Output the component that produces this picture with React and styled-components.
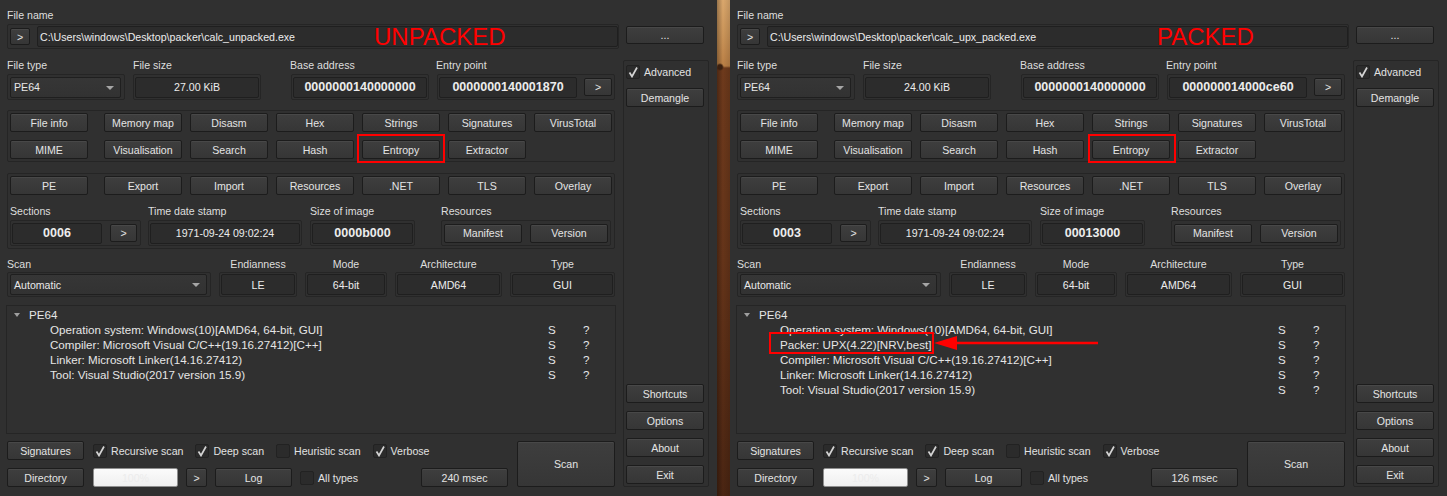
import React from 'react';
import styled, { createGlobalStyle } from 'styled-components';

const GlobalStyle = createGlobalStyle`
  html, body { margin: 0; padding: 0; background: #303030; }
  body { width: 1447px; height: 496px; overflow: hidden; font-family: "Liberation Sans", Arial, sans-serif; }
  * { box-sizing: border-box; }
`;

const Screen = styled.div`
  display: flex;
  width: 1447px;
  height: 496px;
`;

const Wood = styled.div`
  width: 13px;
  height: 496px;
  flex: none;
  background:
    radial-gradient(ellipse 4px 4px at 3px 67px, #3a2010 0, #3a2010 55%, transparent 100%),
    linear-gradient(to right, rgba(0,0,0,0.3), rgba(0,0,0,0) 45%, rgba(0,0,0,0.12)),
    linear-gradient(to bottom, #dba86d 0, #c99256 40px, #bb8046 66px, #6e3a1c 68px, #653419 260px, #4a2512 496px);
`;

const Window = styled.div`
  position: relative;
  width: 717px;
  height: 496px;
  flex: none;
  background: #303030;
  color: #dedede;
  font-size: 10.6px;
  padding: 8px 0 0 7px;
  display: flex;
  flex-direction: column;
`;

const Label = styled.div`
  height: 14px;
  line-height: 14px;
  white-space: nowrap;
  color: #dedede;
  margin-left: ${p => p.$ml || 0}px;
`;

const Frame = styled.div`
  flex: none;
  width: ${p => (p.$w ? `${p.$w}px` : 'auto')};
  height: ${p => p.$h || 26}px;
  border: 1px solid #252525;
  border-radius: 2px;
  padding: ${p => p.$pad || '0 1px'};
  display: flex;
  align-items: center;
  gap: ${p => (p.$gap === undefined ? 8 : p.$gap)}px;
`;

const Btn = styled.div`
  flex: none;
  width: ${p => p.$w || 78}px;
  height: ${p => p.$h || 19}px;
  margin-top: ${p => p.$mt || 0}px;
  margin-left: ${p => p.$ml || 0};
  font-size: 10.6px;
  color: #e4e4e4;
  background: linear-gradient(#3e3e3e, #363636);
  border: 1px solid #1c1c1c;
  border-radius: 2px;
  box-shadow: inset 0 1px 0 #484848;
  display: flex;
  align-items: center;
  justify-content: center;
  white-space: nowrap;
`;

const Field = styled.div`
  flex: ${p => (p.$w ? 'none' : 1)};
  width: ${p => (p.$w ? `${p.$w}px` : 'auto')};
  height: 21px;
  background: #2c2c2c;
  border: 1px solid #1f1f1f;
  border-radius: 2px;
  display: flex;
  align-items: center;
  justify-content: ${p => (p.$left ? 'flex-start' : 'center')};
  padding: 0 2px;
  font-size: ${p => (p.$bold ? '12.5px' : '10.6px')};
  font-weight: ${p => (p.$bold ? 700 : 400)};
  color: #ececec;
  white-space: nowrap;
  overflow: hidden;
`;

const Combo = styled.div`
  position: relative;
  flex: none;
  width: ${p => p.$w}px;
  height: 21px;
  background: linear-gradient(#363636, #323232);
  border: 1px solid #1f1f1f;
  border-radius: 2px;
  display: flex;
  align-items: center;
  padding-left: 3px;
  color: #e8e8e8;
  &::after {
    content: '';
    position: absolute;
    right: 6px;
    top: 8px;
    border-left: 4px solid transparent;
    border-right: 4px solid transparent;
    border-top: 4px solid #a6a6a6;
  }
`;

const FileRow = styled.div`
  display: flex;
  align-items: flex-start;
  gap: 7px;
  margin-top: 2px;
`;

const Body = styled.div`
  display: flex;
  gap: 8px;
  margin-top: 9px;
`;

const Main = styled.div`
  width: 608px;
  flex: none;
  display: flex;
  flex-direction: column;
`;

const Cell = styled.div`
  display: flex;
  flex-direction: column;
  gap: ${p => (p.$gap === undefined ? 2 : p.$gap)}px;
  align-items: ${p => (p.$center ? 'center' : 'flex-start')};
`;

const InfoGrid = styled.div`
  display: grid;
  grid-template-columns: 126px 158px 146px 178px;
`;

const Group = styled.div`
  margin-top: ${p => p.$mt}px;
  height: ${p => p.$h}px;
  border: 1px solid #252525;
  border-radius: 2px;
  padding: 2px;
  display: flex;
  flex-direction: column;
`;

const ButtonGrid = styled.div`
  display: grid;
  grid-template-columns: 86px repeat(6, 78px);
  column-gap: 8px;
  row-gap: 8px;
`;

const HeaderGrid = styled.div`
  display: grid;
  grid-template-columns: 138px 162px 131px 171px;
  margin-top: 9px;
`;

const ScanGrid = styled.div`
  display: grid;
  grid-template-columns: 204px 78px 82px 107px 105px;
  column-gap: 8px;
  margin-top: 8px;
`;

const Tree = styled.div`
  margin: 8px -1px 0;
  height: 129px;
  border: 1px solid #252525;
  padding-top: 1px;
  font-size: 11.6px;
  color: #e6e6e6;
`;

const TreeRow = styled.div`
  display: grid;
  grid-template-columns: 541px 35px auto;
  height: 15px;
  line-height: 15px;
  white-space: nowrap;
`;

const TreeName = styled.div`
  display: flex;
  align-items: center;
  padding-left: ${p => (p.$depth ? 43 : 7)}px;
`;

const Expander = styled.span`
  width: 0;
  height: 0;
  border-left: 3.5px solid transparent;
  border-right: 3.5px solid transparent;
  border-top: 4px solid #a0a0a0;
  margin-right: 9px;
`;

const Bottom = styled.div`
  display: flex;
  gap: 9px;
  margin-top: 7px;
`;

const BottomRows = styled.div`
  width: 501px;
  display: flex;
  flex-direction: column;
  gap: 8px;
`;

const BottomRow = styled.div`
  display: flex;
  align-items: center;
  height: 19px;
  gap: ${p => p.$gap || 8}px;
`;

const CheckList = styled.div`
  display: flex;
  align-items: center;
  gap: 12px;
`;

const CheckItem = styled.div`
  display: flex;
  align-items: center;
  gap: 4px;
  height: 17px;
  white-space: nowrap;
  color: #e2e2e2;
`;

const CheckBox = styled.span`
  width: 14px;
  height: 14px;
  flex: none;
  background: #2b2b2b;
  border: 1px solid #222;
  border-radius: 2px;
  display: flex;
  align-items: center;
  justify-content: center;
`;

const Progress = styled.div`
  width: 85px;
  height: 19px;
  margin-left: 1px;
  flex: none;
  background: linear-gradient(#fbfbfb, #efefef);
  border: 1px solid #8e8e8e;
  border-radius: 2px;
  color: #ececec;
  display: flex;
  align-items: center;
  justify-content: center;
`;

const Sidebar = styled.div`
  width: 86px;
  height: 427px;
  margin-top: 2px;
  flex: none;
  border: 1px solid #252525;
  border-radius: 2px;
  padding: 2px;
  display: flex;
  flex-direction: column;
  align-items: flex-start;
`;

const SideBottom = styled.div`
  margin-top: auto;
  display: flex;
  flex-direction: column;
  gap: 8px;
`;

const RedText = styled.div`
  position: absolute;
  left: ${p => p.$x}px;
  top: 25px;
  font-size: 24px;
  line-height: 1;
  color: #ff0000;
  white-space: nowrap;
`;

const RedBox = styled.div`
  position: absolute;
  left: ${p => p.$x}px;
  top: ${p => p.$y}px;
  width: ${p => p.$w}px;
  height: ${p => p.$h}px;
  border: 2px solid #ff0000;
`;

const ArrowSvg = styled.svg`
  position: absolute;
  left: 200px;
  top: 333px;
`;

function Check({ checked, children }) {
  return (
    <CheckItem>
      <CheckBox>
        {checked && (
          <svg width="12" height="12" viewBox="0 0 12 12">
            <polyline points="2.5,6.5 5,10.5 10,1.5" fill="none" stroke="#d4d4d4" strokeWidth="1.7" />
          </svg>
        )}
      </CheckBox>
      {children}
    </CheckItem>
  );
}

const tools1 = ['File info', 'Memory map', 'Disasm', 'Hex', 'Strings', 'Signatures', 'VirusTotal', 'MIME', 'Visualisation', 'Search', 'Hash', 'Entropy', 'Extractor'];
const tools2 = ['PE', 'Export', 'Import', 'Resources', '.NET', 'TLS', 'Overlay'];

function DieWindow({ d }) {
  return (
    <Window>
      <Label>File name</Label>
      <FileRow>
        <Frame $w={612} $h={25} $gap={7} $pad="0 0 0 2px">
          <Btn $w={20} $h={17}>&gt;</Btn>
          <Field $left>{d.path}</Field>
        </Frame>
        <Btn $mt={2} $h={18}>...</Btn>
      </FileRow>
      <Body>
        <Main>
          <InfoGrid>
            <Cell>
              <Label>File type</Label>
              <Frame $w={118} $pad="0 0 0 2px">
                <Combo $w={111}>PE64</Combo>
              </Frame>
            </Cell>
            <Cell>
              <Label>File size</Label>
              <Frame $w={128}>
                <Field $w={124}>{d.size}</Field>
              </Frame>
            </Cell>
            <Cell>
              <Label $ml={-1}>Base address</Label>
              <Frame $w={138}>
                <Field $w={134} $bold>0000000140000000</Field>
              </Frame>
            </Cell>
            <Cell>
              <Label $ml={-1}>Entry point</Label>
              <Frame $w={178} $gap={7}>
                <Field $w={138} $bold>{d.entry}</Field>
                <Btn $w={28} $h={18}>&gt;</Btn>
              </Frame>
            </Cell>
          </InfoGrid>

          <Group $mt={10} $h={52}>
            <ButtonGrid>
              {tools1.map(t => (
                <Btn key={t}>{t}</Btn>
              ))}
            </ButtonGrid>
          </Group>

          <Group $mt={11} $h={76}>
            <ButtonGrid>
              {tools2.map(t => (
                <Btn key={t}>{t}</Btn>
              ))}
            </ButtonGrid>
            <HeaderGrid>
              <Cell>
                <Label>Sections</Label>
                <Frame $w={131}>
                  <Field $w={90} $bold>{d.sections}</Field>
                  <Btn $w={27} $h={18}>&gt;</Btn>
                </Frame>
              </Cell>
              <Cell>
                <Label>Time date stamp</Label>
                <Frame $w={154}>
                  <Field $w={150}>1971-09-24 09:02:24</Field>
                </Frame>
              </Cell>
              <Cell>
                <Label>Size of image</Label>
                <Frame $w={105}>
                  <Field $w={101} $bold>{d.image}</Field>
                </Frame>
              </Cell>
              <Cell>
                <Label>Resources</Label>
                <Frame $w={170} $pad="0 2px">
                  <Btn>Manifest</Btn>
                  <Btn>Version</Btn>
                </Frame>
              </Cell>
            </HeaderGrid>
          </Group>

          <ScanGrid>
            <Cell $gap={1}>
              <Label>Scan</Label>
              <Frame $w={204} $h={25} $pad="0 0 0 2px">
                <Combo $w={197}>Automatic</Combo>
              </Frame>
            </Cell>
            <Cell $gap={1} $center>
              <Label>Endianness</Label>
              <Frame $w={78} $h={25}>
                <Field $w={74}>LE</Field>
              </Frame>
            </Cell>
            <Cell $gap={1} $center>
              <Label>Mode</Label>
              <Frame $w={82} $h={25}>
                <Field $w={78}>64-bit</Field>
              </Frame>
            </Cell>
            <Cell $gap={1} $center>
              <Label>Architecture</Label>
              <Frame $w={107} $h={25}>
                <Field $w={103}>AMD64</Field>
              </Frame>
            </Cell>
            <Cell $gap={1} $center>
              <Label>Type</Label>
              <Frame $w={105} $h={25}>
                <Field $w={101}>GUI</Field>
              </Frame>
            </Cell>
          </ScanGrid>

          <Tree>
            <TreeRow>
              <TreeName>
                <Expander />
                PE64
              </TreeName>
            </TreeRow>
            {d.results.map(r => (
              <TreeRow key={r}>
                <TreeName $depth={1}>{r}</TreeName>
                <span>S</span>
                <span>?</span>
              </TreeRow>
            ))}
          </Tree>

          <Bottom>
            <BottomRows>
              <BottomRow $gap={9}>
                <Btn $w={77}>Signatures</Btn>
                <CheckList>
                  <Check checked>Recursive scan</Check>
                  <Check checked>Deep scan</Check>
                  <Check>Heuristic scan</Check>
                  <Check checked>Verbose</Check>
                </CheckList>
              </BottomRow>
              <BottomRow>
                <Btn $w={77}>Directory</Btn>
                <Progress>100%</Progress>
                <Btn $w={21}>&gt;</Btn>
                <Btn $w={77}>Log</Btn>
                <Check>All types</Check>
                <Btn $w={87} $ml="auto">{d.time}</Btn>
              </BottomRow>
            </BottomRows>
            <Btn $w={98} $h={46}>Scan</Btn>
          </Bottom>
        </Main>

        <Sidebar>
          <Check checked>Advanced</Check>
          <Btn $mt={8}>Demangle</Btn>
          <SideBottom>
            <Btn>Shortcuts</Btn>
            <Btn>Options</Btn>
            <Btn>About</Btn>
            <Btn>Exit</Btn>
          </SideBottom>
        </Sidebar>
      </Body>

      <RedText $x={d.markX}>{d.mark}</RedText>
      <RedBox $x={d.entropyX} $y={134} $w={88} $h={29} />
      {d.packer && (
        <>
          <RedBox $x={39} $y={332} $w={165} $h={22} />
          <ArrowSvg width="170" height="20" viewBox="0 0 170 20">
            <line x1="22" y1="10" x2="168" y2="10" stroke="#ff0000" strokeWidth="2.5" />
            <polygon points="4,10 27,3 27,17" fill="#ff0000" />
          </ArrowSvg>
        </>
      )}
    </Window>
  );
}

const baseResults = [
  'Operation system: Windows(10)[AMD64, 64-bit, GUI]',
  'Compiler: Microsoft Visual C/C++(19.16.27412)[C++]',
  'Linker: Microsoft Linker(14.16.27412)',
  'Tool: Visual Studio(2017 version 15.9)',
];

const left = {
  path: 'C:\\Users\\windows\\Desktop\\packer\\calc_unpacked.exe',
  size: '27.00 KiB',
  entry: '0000000140001870',
  sections: '0006',
  image: '0000b000',
  time: '240 msec',
  results: baseResults,
  mark: 'UNPACKED',
  markX: 374,
  entropyX: 357,
  packer: false,
};

const right = {
  path: 'C:\\Users\\windows\\Desktop\\packer\\calc_upx_packed.exe',
  size: '24.00 KiB',
  entry: '000000014000ce60',
  sections: '0003',
  image: '00013000',
  time: '126 msec',
  results: [baseResults[0], 'Packer: UPX(4.22)[NRV,best]', ...baseResults.slice(1)],
  mark: 'PACKED',
  markX: 427,
  entropyX: 358,
  packer: true,
};

export default function App() {
  return (
    <>
      <GlobalStyle />
      <Screen>
        <DieWindow d={left} />
        <Wood />
        <DieWindow d={right} />
      </Screen>
    </>
  );
}
